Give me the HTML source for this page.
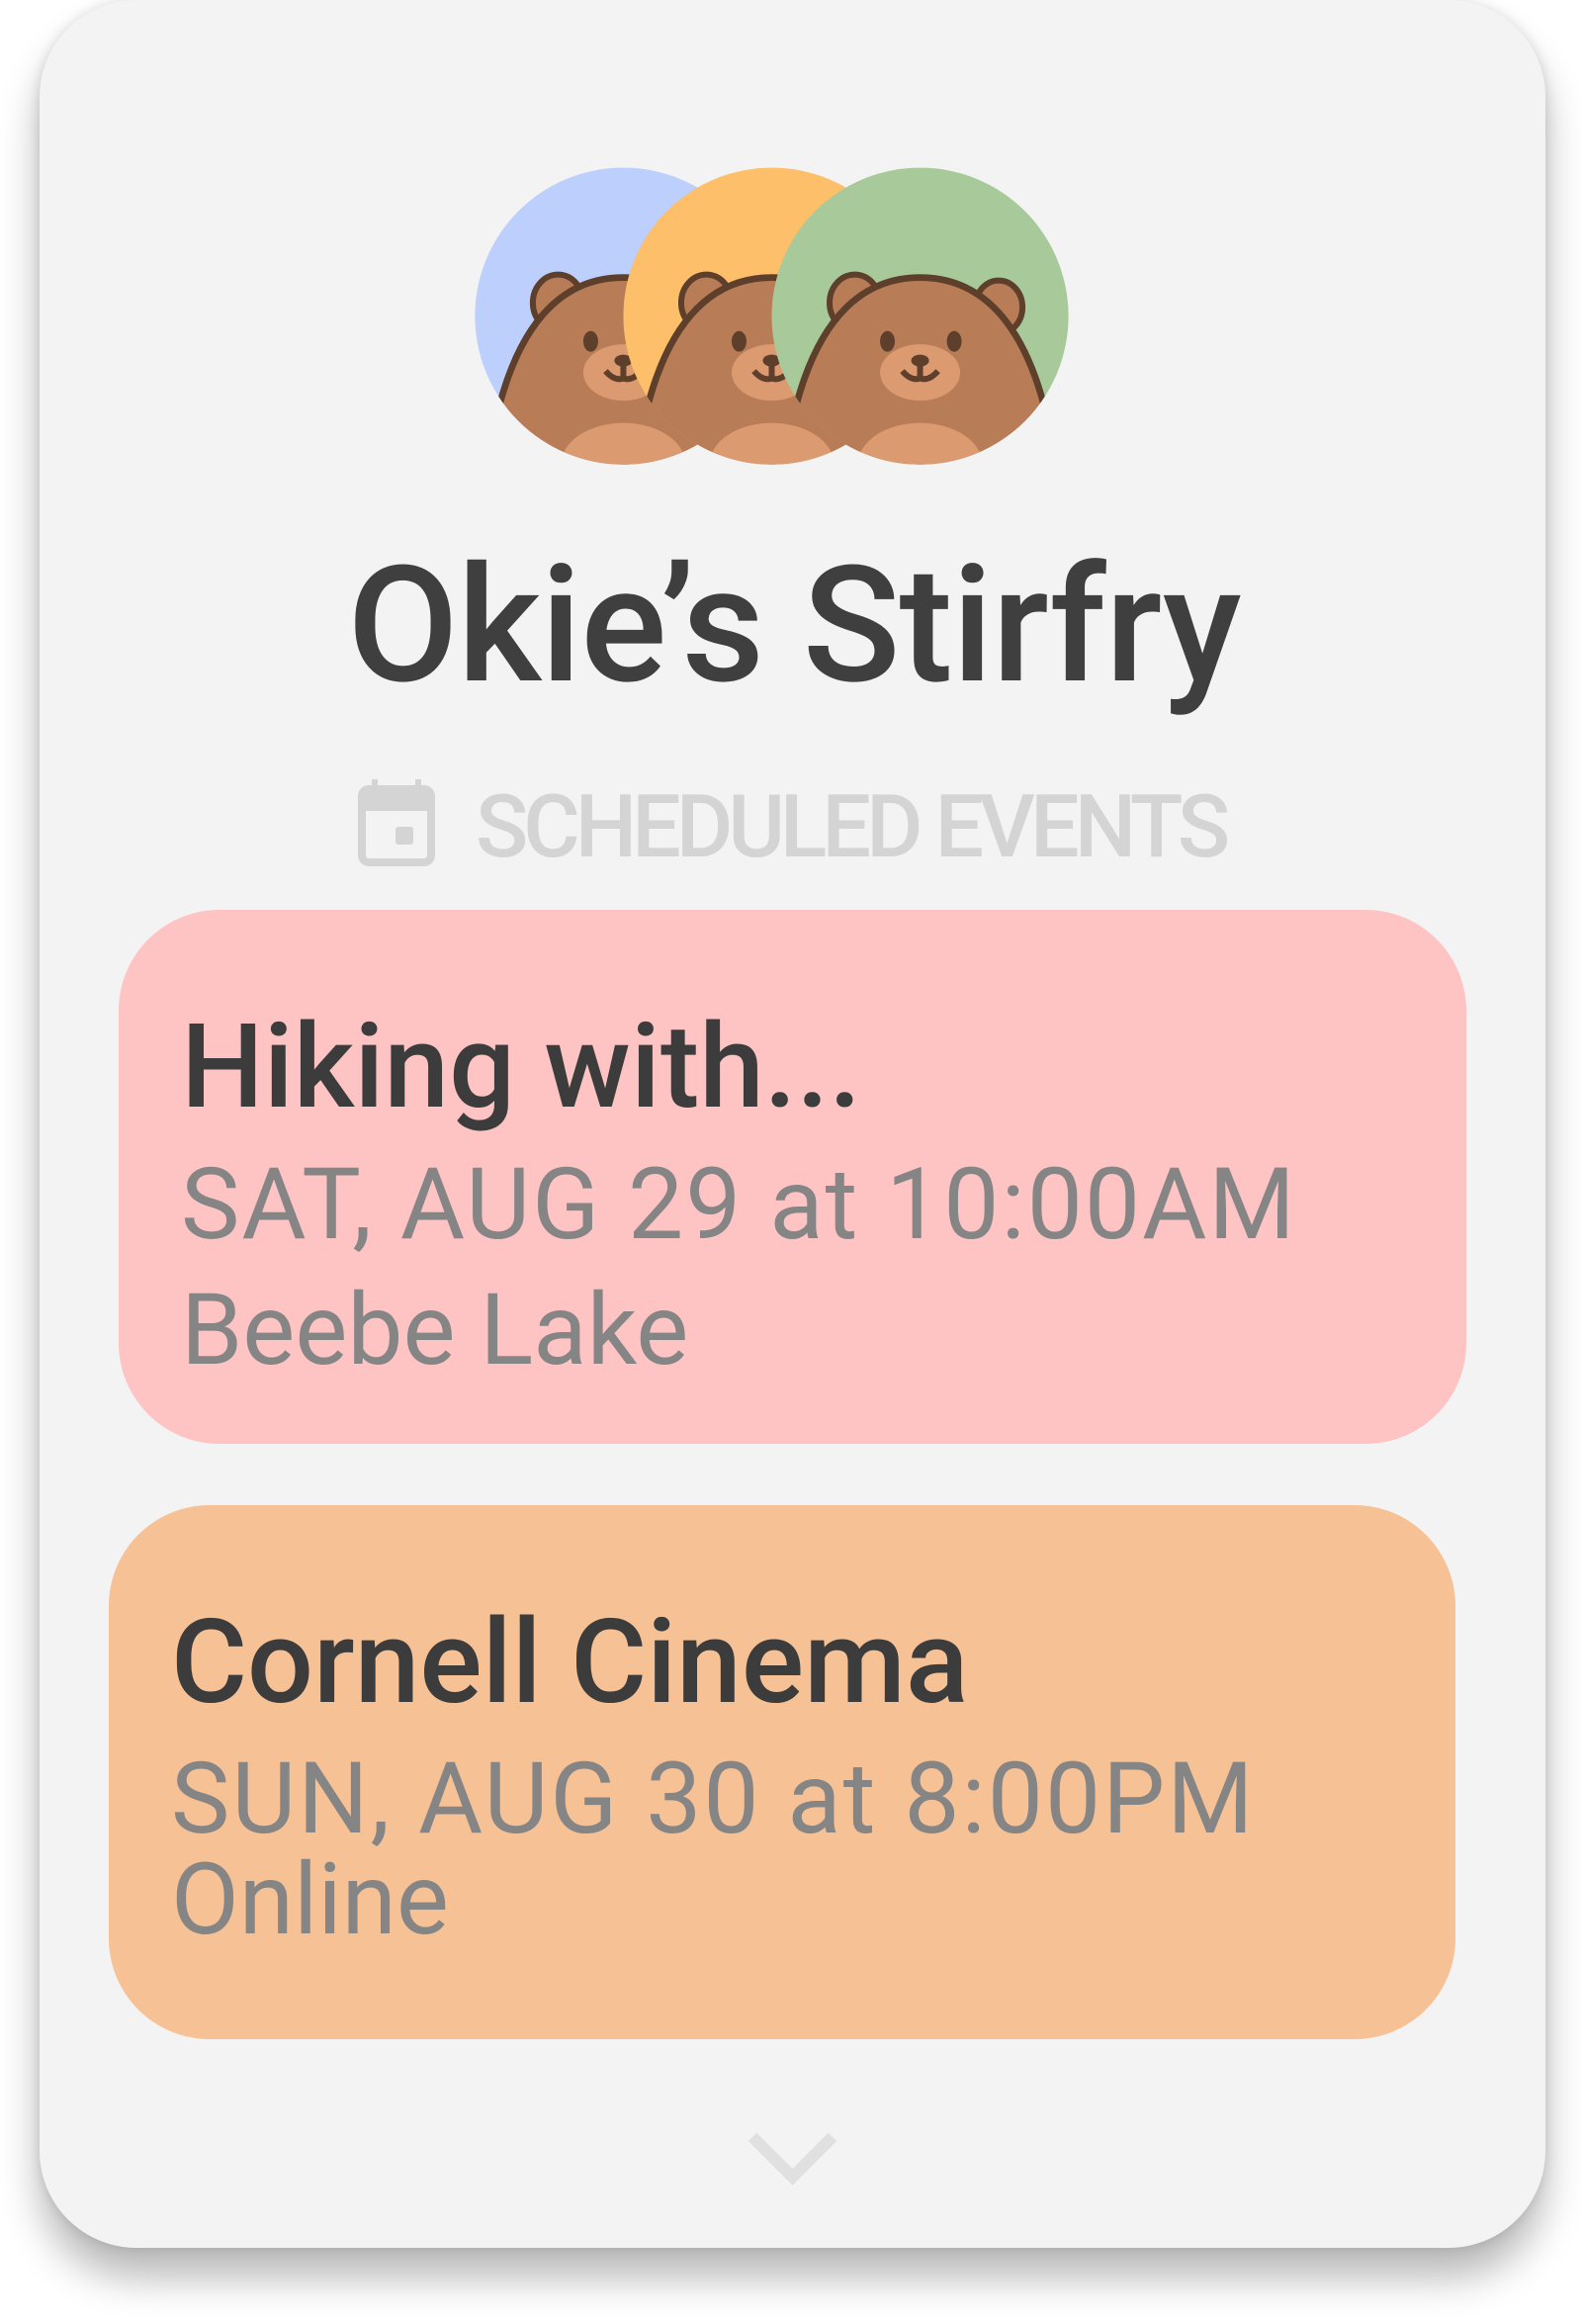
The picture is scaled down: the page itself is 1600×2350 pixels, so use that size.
<!DOCTYPE html>
<html><head><meta charset="utf-8"><style>
html,body{margin:0;padding:0;background:#fff;width:1600px;height:2350px;overflow:hidden;font-family:"Roboto","Liberation Sans",sans-serif;}
.card{position:absolute;left:40px;top:0;width:1523px;height:2273px;background:#f3f3f3;border-radius:98px;box-shadow:0 30px 40px rgba(0,0,0,0.28),0 0 12px rgba(0,0,0,0.12);}
.t{position:absolute;white-space:nowrap;line-height:1;}
.ev{position:absolute;border-radius:102px;}
</style></head><body>
<div class="card"></div>
<div class="t" style="left:0;width:1606px;text-align:center;top:551px;font-size:163px;font-weight:500;color:#3f3f3f;letter-spacing:-1px;">Okie’s Stirfry</div>
<div class="t" style="left:481px;top:793px;font-size:88px;font-weight:500;color:#d4d4d4;letter-spacing:-5px;">SCHEDULED EVENTS</div>
<svg style="position:absolute;left:360px;top:786px" width="82" height="90" viewBox="0 0 82 90">
<rect x="6" y="12" width="70" height="74" rx="7" fill="none" stroke="#d4d4d4" stroke-width="8"/>
<rect x="6" y="12" width="70" height="22" fill="#d4d4d4"/>
<rect x="16" y="2" width="6" height="14" fill="#d4d4d4"/><rect x="60" y="2" width="6" height="14" fill="#d4d4d4"/>
<rect x="40" y="50" width="18" height="18" rx="3" fill="#d4d4d4"/>
</svg>
<div class="ev" style="left:120px;top:920px;width:1363px;height:540px;background:#fec3c3;"></div>
<div class="t" style="left:183px;top:1020px;font-size:118px;font-weight:500;color:#3c3c3c;letter-spacing:0px;">Hiking with...</div>
<div class="t" style="left:183px;top:1169px;font-size:100px;color:#858585;letter-spacing:2px;">SAT, AUG 29 at 10:00AM</div>
<div class="t" style="left:183px;top:1296px;font-size:100px;color:#858585;letter-spacing:0px;">Beebe Lake</div>
<div class="ev" style="left:110px;top:1522px;width:1362px;height:540px;background:#f7c196;"></div>
<div class="t" style="left:173px;top:1622px;font-size:118px;font-weight:500;color:#3c3c3c;letter-spacing:0px;">Cornell Cinema</div>
<div class="t" style="left:173px;top:1770px;font-size:100px;color:#858585;letter-spacing:2px;">SUN, AUG 30 at 8:00PM</div>
<div class="t" style="left:173px;top:1872px;font-size:100px;color:#858585;letter-spacing:0px;">Online</div>
<svg style="position:absolute;left:0;top:0" width="1600" height="2350" viewBox="0 0 1066 1566">
<defs>
<clipPath id="c1"><circle cx="420" cy="213" r="100"/></clipPath>
<clipPath id="c2"><circle cx="520" cy="213" r="100"/></clipPath>
<clipPath id="c3"><circle cx="620" cy="213" r="100"/></clipPath>
<g id="bear">
<ellipse cx="-44" cy="-9" rx="17" ry="19" fill="#b87c57" stroke="#5e3f2b" stroke-width="4"/>
<ellipse cx="53" cy="-6" rx="16" ry="18" fill="#b87c57" stroke="#5e3f2b" stroke-width="4"/>
<path d="M-84,62 C-68,0 -38,-26 0,-26 C38,-26 68,0 84,62 L84,130 L-84,130 Z" fill="#b87c57" stroke="#5e3f2b" stroke-width="4.5"/>
<ellipse cx="-22" cy="17" rx="5" ry="7" fill="#5e3f2b"/>
<ellipse cx="23" cy="17" rx="5" ry="7" fill="#5e3f2b"/>
<ellipse cx="0" cy="38" rx="27" ry="19" fill="#db9a70"/>
<ellipse cx="0" cy="30" rx="6" ry="4" fill="#5e3f2b"/>
<path d="M0,31 V42 M-12,37 Q-6,44 0,42 Q6,44 12,37" fill="none" stroke="#5e3f2b" stroke-width="4"/>
<ellipse cx="0" cy="100" rx="42" ry="28" fill="#db9a70"/>
</g>
</defs>
<circle cx="420" cy="213" r="100" fill="#bccffd"/>
<g clip-path="url(#c1)"><use href="#bear" x="420" y="213"/></g>
<circle cx="520" cy="213" r="100" fill="#fdbf69"/>
<g clip-path="url(#c2)"><use href="#bear" x="520" y="213"/></g>
<circle cx="620" cy="213" r="100" fill="#a8ca9b"/>
<g clip-path="url(#c3)"><use href="#bear" x="620" y="213"/></g>
<path d="M507,1440 L534,1467 L561,1440" fill="none" stroke="#e0e0e0" stroke-width="8"/>
</svg>
</body></html>
